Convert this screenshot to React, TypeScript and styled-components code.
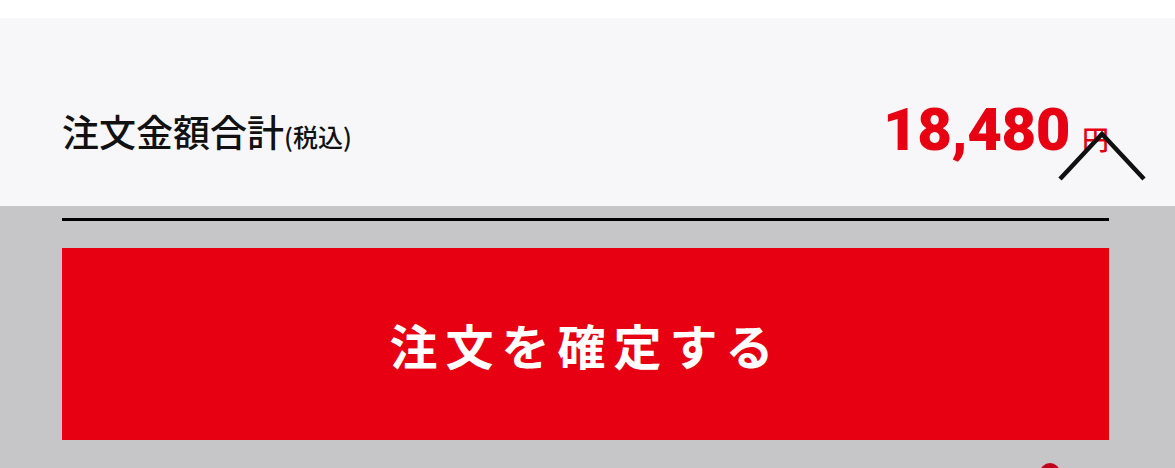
import styled, { createGlobalStyle } from "styled-components";

const GlobalStyle = createGlobalStyle`
  html, body {
    margin: 0;
    padding: 0;
    background: #ffffff;
  }
  body {
    font-family: "Noto Sans CJK JP", "Noto Sans", sans-serif;
    overflow: hidden;
  }
`;

const Page = styled.div`
  width: 1175px;
  height: 468px;
  padding-top: 18px;
  box-sizing: border-box;
  display: flex;
  flex-direction: column;
  background: #ffffff;
  overflow: hidden;
`;

const TotalPanel = styled.div`
  position: relative;
  flex-shrink: 0;
  height: 188px;
  background: #f7f7f9;
  padding: 0 66px 0 62px;
  display: flex;
  align-items: center;
  justify-content: space-between;
`;

const Label = styled.div`
  display: flex;
  align-items: baseline;
  color: #111111;
  font-size: 37px;
  font-weight: 500;
  margin-top: 38px;
`;

const LabelNote = styled.span`
  font-size: 25px;
`;

const Price = styled.div`
  display: flex;
  align-items: baseline;
  color: #e60012;
  margin-top: 34px;
`;

const Amount = styled.span`
  font-family: "Roboto", "Noto Sans", sans-serif;
  font-size: 60px;
  font-weight: 900;
  letter-spacing: -0.5px;
`;

const Yen = styled.span`
  font-size: 27px;
  font-weight: 500;
  margin-left: 12px;
`;

const Chevron = styled.svg`
  position: absolute;
  right: 27px;
  top: 111px;
`;

const Overlay = styled.div`
  flex-shrink: 0;
  height: 262px;
  background: #c6c6c8;
  padding: 12px 66px 0 62px;
  display: flex;
  flex-direction: column;
`;

const Rule = styled.div`
  flex-shrink: 0;
  height: 3px;
  background: #000000;
`;

const ConfirmButton = styled.button`
  flex-shrink: 0;
  margin-top: 27px;
  height: 192px;
  border: none;
  background: #e60012;
  color: #ffffff;
  font-family: "Noto Sans CJK JP", "Noto Sans", sans-serif;
  font-size: 48px;
  font-weight: 700;
  letter-spacing: 8px;
  padding: 0;
  cursor: pointer;
`;

const Footer = styled.div`
  flex-shrink: 0;
  display: flex;
  justify-content: flex-end;
  padding: 23px 49px 0 0;
`;

const Dot = styled.span`
  width: 20px;
  height: 20px;
  border-radius: 50%;
  background: #c0001a;
`;

export default function App() {
  return (
    <>
      <GlobalStyle />
      <Page>
        <TotalPanel>
          <Label>
            注文金額合計<LabelNote>(税込)</LabelNote>
          </Label>
          <Price>
            <Amount>18,480</Amount>
            <Yen>円</Yen>
          </Price>
          <Chevron width="92" height="54" viewBox="0 0 92 54">
            <path
              d="M4 50 L46 5 L88 50"
              fill="none"
              stroke="#111111"
              strokeWidth="4.5"
            />
          </Chevron>
        </TotalPanel>
        <Overlay>
          <Rule />
          <ConfirmButton>注文を確定する</ConfirmButton>
          <Footer>
            <Dot />
          </Footer>
        </Overlay>
      </Page>
    </>
  );
}
